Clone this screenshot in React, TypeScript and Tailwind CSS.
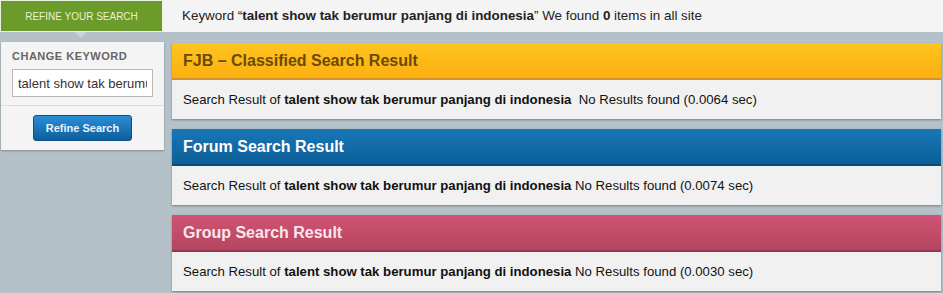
import React from 'react';

const keyword = 'talent show tak berumur panjang di indonesia';

interface ResultPanelProps {
  title: string;
  headerClass: string;
  time: string;
  gap?: string;
}

const ResultPanel: React.FC<ResultPanelProps> = ({ title, headerClass, time, gap = ' ' }) => {
  return (
    <div className="bg-[#f1f1f1] shadow-[0_1px_2px_rgba(0,0,0,0.35)]">
      <div className={`h-[37px] flex items-center px-[11px] text-[16px] font-bold ${headerClass}`}>
        {title}
      </div>
      <div className="h-[39px] flex items-center px-[11px] text-[13.2px] text-[#111]">
        <span>
          Search Result of <b>{keyword}</b>
          {gap}No Results found ({time} sec)
        </span>
      </div>
    </div>
  );
};

export default function App() {
  return (
    <div className="w-[943px] h-[293px] bg-[#b4c1c8] overflow-hidden font-['Liberation_Sans',Arial,sans-serif]">
      {/* Top bar */}
      <div className="flex h-[32px]">
        <div className="relative w-[163px] bg-[#6b9b2a] border border-[#e9efe2] flex items-center justify-center text-[10px] text-[#e6f3cf] uppercase">
          Refine Your Search
          <div className="absolute left-[74px] -bottom-[7px] w-0 h-0 border-l-[6px] border-r-[6px] border-t-[6px] border-l-transparent border-r-transparent border-t-[#c9d3d8]" />
        </div>
        <div className="flex-1 bg-[#f4f4f4] flex items-center pl-[19px] text-[13.4px] text-[#222]">
          <span>
            Keyword “<b>{keyword}</b>” We found <b>0</b> items in all site
          </span>
        </div>
      </div>

      <div className="flex gap-[8px] pt-[11px]">
        {/* Sidebar */}
        <div className="w-[163px] shrink-0 self-start -mt-[1px] ml-[1px] bg-[#f4f4f4] shadow-[0_1px_2px_rgba(0,0,0,0.3)]">
          <div className="px-[11px] pt-[8px] pb-[8px] border-b border-[#dcdcdc]">
            <div className="text-[11px] leading-[13px] font-bold text-[#666] tracking-[0.5px] mb-[6px]">CHANGE KEYWORD</div>
            <input
              readOnly
              value={keyword}
              className="w-[141px] h-[28px] bg-white border border-[#b7b7b7] px-[5px] text-[13px] text-[#333] outline-none"
            />
          </div>
          <div className="flex justify-center pt-[9px] pb-[9px]">
            <button className="w-[99px] h-[26px] rounded-[3px] bg-gradient-to-b from-[#2a8fd6] to-[#0d5e9c] border border-[#0b4f84] text-[11px] font-bold text-[#e7f4ff]">
              Refine Search
            </button>
          </div>
        </div>

        {/* Results */}
        <div className="flex-1 flex flex-col gap-[10px] pr-[2px]">
          <ResultPanel
            title="FJB – Classified Search Result"
            headerClass="bg-gradient-to-b from-[#ffc41f] to-[#fcb00f] border-b-2 border-[#d4932a] text-[#6a4a06]"
            time="0.0064"
            gap={'\u00a0 '}
          />
          <ResultPanel
            title="Forum Search Result"
            headerClass="bg-gradient-to-b from-[#1877b7] to-[#0d5f98] border-b-2 border-[#0a4c7a] text-white"
            time="0.0074"
          />
          <ResultPanel
            title="Group Search Result"
            headerClass="bg-gradient-to-b from-[#d05474] to-[#b4455f] border-b-2 border-[#963650] text-[#fbe6ec]"
            time="0.0030"
          />
        </div>
      </div>
    </div>
  );
}
